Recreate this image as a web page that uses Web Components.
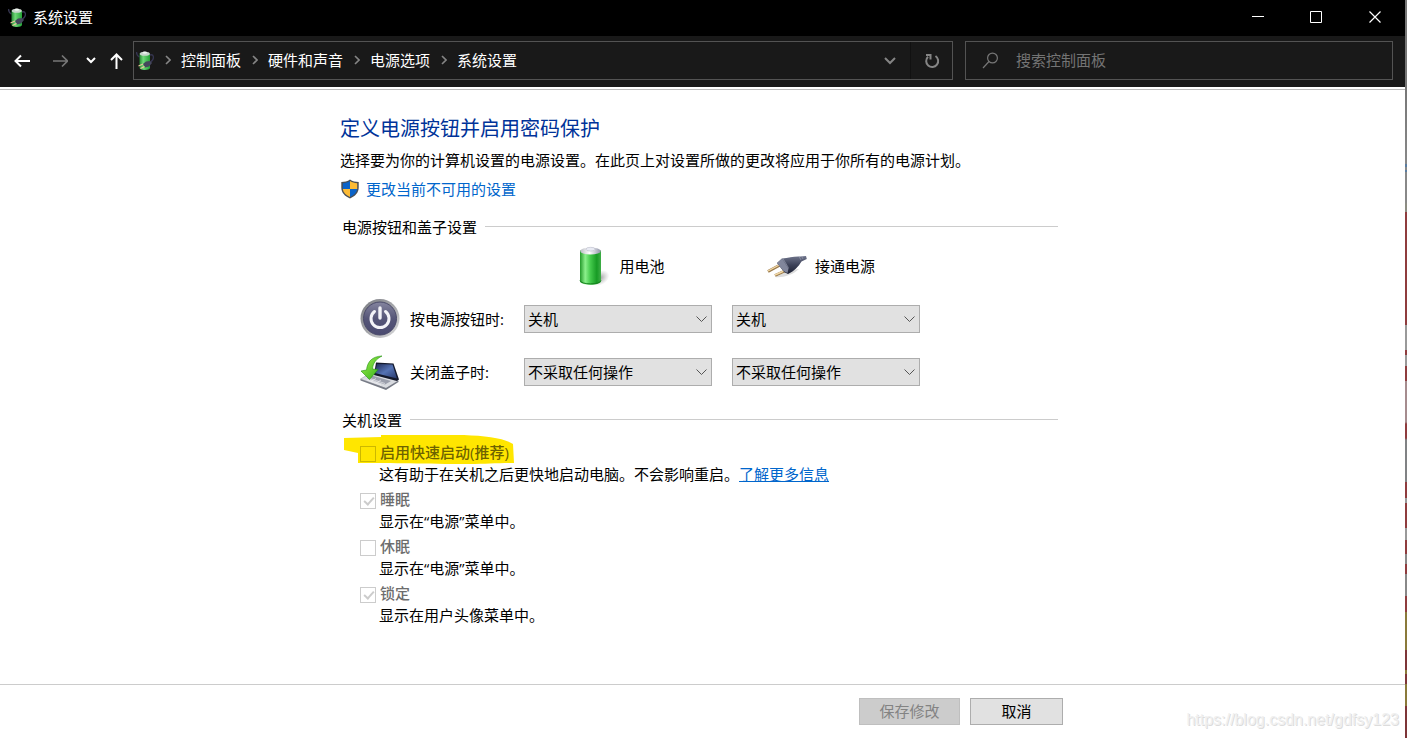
<!DOCTYPE html>
<html lang="zh-CN">
<head>
<meta charset="utf-8">
<title>系统设置</title>
<style>
  body {
    margin: 0;
    background: #fff;
    color: #000;
    font: 15px/20px "Open Sans", "Noto Sans CJK SC", sans-serif;
  }
</style>
</head>
<body>
<settings-window></settings-window>

<template id="window-template">
  <style>
    :host { display: flex; min-height: 100vh; position: relative; }
    .window { flex: 1; min-width: 0; display: flex; flex-direction: column; }
    .desktop {
      width: 2px;
      background: linear-gradient(#777 0 87px, #888 164px, #5a7ca0 164px 167px, #888 167px 170px, #5a7ca0 170px 172px, #888 172px 203px,
        #8c8c82 203px 212px, #8f3c3e 212px 325px, #999 325px 350px, #8f3c3e 350px 355px, #999 355px 366px, #8f3c3e 366px 381px,
        #a58c8e 381px 422px, #8f3c3e 424px 438px, #808284 440px 482px, #8f3c3e 482px 498px, #999 498px 503px, #8f3c3e 503px 528px,
        #999 528px 540px, #8f3c3e 540px 554px, #888 554px 564px, #8f3c3e 564px 574px, #888 574px 596px, #8f3c3e 596px 612px,
        #8a7a3a 612px 650px, #7d3538 650px 670px, #8a7a3a 670px 674px, #7d3538 674px 684px, #8a7a3a 684px 706px, #7d3538 706px);
    }
    main { flex: 1; padding: 26px 0 0; }
    .page { max-width: 725px; margin: 0 auto; }
    h1 { margin: 0; font-size: 20px; line-height: 28px; font-weight: 400; color: #003399; }
    p { margin: 7px 0 0; }
    .admin { display: flex; align-items: center; gap: 7px; margin: 9px 0 18px 1px; }
    .admin a { color: #0066cc; text-decoration: none; }
    .rows { display: grid; row-gap: 13px; padding: 9px 0 0 20px; }
    .sources { display: grid; grid-template-columns: 164px 188px 188px; column-gap: 0; }
    .sources div { display: flex; align-items: center; justify-content: center; gap: 8px; grid-column: 2; }
    .sources div + div { grid-column: 3; margin-left: 20px; margin-right: -10px; }
    .sources svg { flex: none; }
    .shutdown { display: block; margin-top: 18px; }
    .options { display: grid; row-gap: 3px; padding: 11px 0 0 20px; }
    footer { border-top: 1px solid #ccc; margin-top: 40px; }
    .actions { display: flex; justify-content: flex-end; gap: 10px; padding: 13px 2px; box-sizing: border-box; }
    .actions button { font: inherit; line-height: 25px; height: 27px; padding: 0; width: 93px; border: 1px solid #adadad; background: #e1e1e1; color: #000; }
    .actions button:disabled { width: 101px; border-color: #bfbfbf; background: #ccc; color: #838383; }
    .watermark { position: absolute; right: 8px; bottom: 8px; color: #f0f0f0; text-shadow: 1px 1px #dcdcdc; font: 16px/20px "Liberation Sans", sans-serif; }
  </style>
  <div class="window">
    <title-bar>系统设置</title-bar>
    <nav-bar></nav-bar>
    <main>
      <div class="page">
        <h1>定义电源按钮并启用密码保护</h1>
        <p>选择要为你的计算机设置的电源设置。在此页上对设置所做的更改将应用于你所有的电源计划。</p>
        <div class="admin">
          <svg width="18" height="20" viewBox="0 0 18 20">
            <path d="M9 .5C6.500 2.300 3.500 3 .3 3v5.500c0 5.200 3.500 8.800 8.700 11 5.200-2.200 8.700-5.800 8.700-11V3C14.500 3 11.500 2.300 9 .5Z" fill="#4a4f55"/>
            <path d="M9 2C6.800 3.400 4.500 4.100 1.800 4.300V10H9Z" fill="#0b63c8"/>
            <path d="M9 2c2.200 1.400 4.500 2.100 7.200 2.300V10H9Z" fill="#fdbb35"/>
            <path d="M1.800 10H9v8C5 16.200 2.200 13.600 1.800 10Z" fill="#fdbb35"/>
            <path d="M16.200 10H9v8c4-1.800 6.800-4.400 7.200-8Z" fill="#0b63c8"/>
          </svg>
          <a href="#">更改当前不可用的设置</a>
        </div>

        <group-heading>电源按钮和盖子设置</group-heading>
        <div class="rows">
          <div class="sources">
            <div>
              <svg width="40" height="40" viewBox="0 0 40 40">
                <defs>
                  <linearGradient id="cell"><stop offset="0" stop-color="#249a2b"/><stop offset=".25" stop-color="#8cf08c"/><stop offset=".5" stop-color="#43c94b"/><stop offset=".8" stop-color="#179b25"/><stop offset="1" stop-color="#3fae47"/></linearGradient>
                  <linearGradient id="cap"><stop offset="0" stop-color="#b9bcc4"/><stop offset=".45" stop-color="#fff"/><stop offset="1" stop-color="#8f93a8"/></linearGradient>
                  <radialGradient id="shade"><stop offset="0" stop-color="#777" stop-opacity=".7"/><stop offset="1" stop-color="#999" stop-opacity="0"/></radialGradient>
                </defs>
                <ellipse cx="29" cy="32" rx="10" ry="7" transform="rotate(-30 29 32)" fill="url(#shade)"/>
                <path d="M9 4.500V35c0 5 21 5 21 0V4.500Z" fill="url(#cell)"/>
                <path d="M9 34.500c1 4.500 20 4.500 21 0" fill="none" stroke="#17811f"/>
                <ellipse cx="19.500" cy="5" rx="10.300" ry="3.600" fill="url(#cap)"/>
                <ellipse cx="19.500" cy="3.200" rx="4.500" ry="1.900" fill="#e9ebf4" stroke="#aeb1bf" stroke-width=".5"/>
              </svg>
              <span>用电池</span>
            </div>
            <div>
              <svg width="40" height="40" viewBox="0 0 40 40">
                <defs><linearGradient id="plug" x2="0" y2="1"><stop offset="0" stop-color="#6f758c"/><stop offset=".5" stop-color="#3d4258"/><stop offset="1" stop-color="#1c2032"/></linearGradient></defs>
                <path d="M8 31c7 1 18-2 24-8l-8 1Z" fill="#ddd"/>
                <path d="M1 25.500 13 19" stroke="#9a7a4b" stroke-width="3"/>
                <path d="m1 25 12-6.500" stroke="#f2d8a5" stroke-width="1.400"/>
                <path d="m8 29.500 12-5.500" stroke="#9a7a4b" stroke-width="3"/>
                <path d="m8 29 12-5.500" stroke="#f2d8a5" stroke-width="1.400"/>
                <path d="m10 17 5-4.500c7-.5 12-2.500 18-2l6-.5.800 3-5.300 2.500c-3 5-7 9.500-13.500 12.500l-4-2Z" fill="url(#plug)"/>
                <path d="m10 17 5-4.500 6.500 10-1 4.500-4-2Z" fill="#81869b"/>
                <path d="m16 12.800 5.500 9M32 10.500l2 3.500M34.500 10l1.500 3" stroke="#a0a5b7" stroke-width=".6"/>
              </svg>
              <span>接通电源</span>
            </div>
          </div>
          <power-row label="按电源按钮时:" value="关机">
            <svg width="40" height="40" viewBox="0 0 40 40">
              <defs>
                <linearGradient id="ring" x2="1" y2="1"><stop offset="0" stop-color="#77797f"/><stop offset=".5" stop-color="#a4a5a9"/><stop offset="1" stop-color="#dedee0"/></linearGradient>
                <linearGradient id="disc" x2="0" y2="1"><stop offset="0" stop-color="#85859f"/><stop offset=".5" stop-color="#565678"/><stop offset="1" stop-color="#4a4a70"/></linearGradient>
              </defs>
              <circle cx="20" cy="19.500" r="19.500" fill="url(#ring)"/>
              <circle cx="20" cy="19.500" r="16.500" fill="url(#disc)" stroke="#4a4a69"/>
              <path d="M14.500 12.500a9 9 0 1 0 11 0" fill="none" stroke="#f4f4f8" stroke-width="3" stroke-linecap="round"/>
              <path d="M20 9V19" stroke="#f4f4f8" stroke-width="3.400" stroke-linecap="round"/>
            </svg>
          </power-row>
          <power-row label="关闭盖子时:" value="不采取任何操作">
            <svg width="40" height="40" viewBox="0 0 40 40">
              <defs>
                <linearGradient id="lid" x2="1" y2="1"><stop offset="0" stop-color="#1f2b56"/><stop offset=".5" stop-color="#5573b4"/><stop offset="1" stop-color="#26376b"/></linearGradient>
                <linearGradient id="arrow" x2="1" y2="1"><stop offset="0" stop-color="#a2f04f"/><stop offset="1" stop-color="#2fae18"/></linearGradient>
              </defs>
              <path d="M.5 27 11 21l27 8-12 7.500Z" fill="#d9dbe0" stroke="#9a9da6" stroke-width=".6"/>
              <path d="m.5 27 25.500 9V38L.5 28.500ZM26 36l12.500-7.500V30L26 38Z" fill="#777b86"/>
              <path d="m7 26 5-2.500 19 5.500-6 3.500Z" fill="#9b9fac"/>
              <path d="M7 28 21 33M10 26.500 25 31.500M11 29.500l5-3M16 31l5-3" stroke="#f4f4f6" stroke-width=".6"/>
              <path d="m16 10.500 17.500 1L39 27.500l-2 1.500-23-6Z" fill="#14192b"/>
              <path d="m17 12 15.500.5 4.500 14L15 21Z" fill="url(#lid)"/>
              <path d="M22 4C12 4.500 7.500 9.500 6.500 18L1 19l8.500 8.500L18 17.500l-5.500-.5c.5-6 3.500-10 9.500-13Z" fill="url(#arrow)" stroke="#23930f" stroke-width=".6"/>
            </svg>
          </power-row>
        </div>

        <group-heading class="shutdown">关机设置</group-heading>
        <div class="options">
          <shutdown-option label="启用快速启动(推荐)" highlighted>这有助于在关机之后更快地启动电脑。不会影响重启。<a href="#" style="color:#0066cc">了解更多信息</a></shutdown-option>
          <shutdown-option label="睡眠" checked>显示在“电源”菜单中。</shutdown-option>
          <shutdown-option label="休眠">显示在“电源”菜单中。</shutdown-option>
          <shutdown-option label="锁定" checked>显示在用户头像菜单中。</shutdown-option>
        </div>
      </div>
    </main>
    <footer>
      <div class="page actions">
        <button type="button" disabled>保存修改</button>
        <button type="button">取消</button>
      </div>
    </footer>
  </div>
  <div class="desktop"></div>
  <span class="watermark">https://blog.csdn.net/gdfsy123</span>
</template>

<template id="battery-template">
  <style>:host { display: block; flex: none; width: 18px; height: 20px; } svg { display: block; }</style>
  <svg width="18" height="20" viewBox="0 0 18 20">
    <defs><linearGradient id="g"><stop offset="0" stop-color="#278a35"/><stop offset=".35" stop-color="#6fd878"/><stop offset="1" stop-color="#23a337"/></linearGradient></defs>
    <path d="M.5 1c0 3 1 4 3 5M14 4c4-1 4 3 2.500 5L14 12" fill="none" stroke="#34344f" stroke-width="1.400"/>
    <path d="M3.500 2.500v14.500c0 2.500 10.500 2.500 10.500 0V2.500Z" fill="url(#g)"/>
    <ellipse cx="8.800" cy="2.800" rx="5" ry="2" fill="#c8d5cc"/>
    <ellipse cx="8.800" cy="1.600" rx="2.300" ry="1.200" fill="#eef3f0"/>
    <path d="m7 13 3-2.500 4-.5 2 2-3 3.500-4 1Z" fill="#45475c"/>
    <path d="m2.500 15 4.500-2M4.500 17.500l4-2" stroke="#e8c79a" stroke-width="1.300"/>
  </svg>
</template>

<template id="title-template">
  <style>
    :host { display: flex; align-items: center; height: 36px; background: #000; color: #fff; padding-left: 8px; }
    .name { flex: 1; margin-left: 7px; padding-bottom: 2px; }
    button { width: 58px; height: 36px; padding: 0 0 2px; border: 0; background: none; color: inherit; display: grid; place-items: center; }
    button:last-child { width: 60px; }
  </style>
  <battery-icon></battery-icon>
  <span class="name"><slot></slot></span>
  <button type="button" aria-label="最小化"><svg width="12" height="12"><path d="M0 5.500h12" stroke="#fff"/></svg></button>
  <button type="button" aria-label="最大化"><svg width="12" height="12"><path d="M.5.5h11v11H.5Z" fill="none" stroke="#fff"/></svg></button>
  <button type="button" aria-label="关闭"><svg width="12" height="12"><path d="m.5.5 11 11m0-11-11 11" stroke="#fff" stroke-width="1.200"/></svg></button>
</template>

<template id="nav-template">
  <style>
    :host { display: block; background: #191919; color: #fff; border-bottom: 2px solid #fff; box-shadow: 0 1px #bbb; }
    .bar { display: grid; grid-template-columns: auto minmax(0, 1fr) minmax(0, 428px); column-gap: 12px; padding: 5px 12px 7px 3px; }
    .moves { display: flex; margin-right: -8px; }
    button { border: 0; background: none; padding: 0; display: grid; place-items: center; height: 37px; }
    .moves button { width: 38px; height: 39px; }
    .moves .recent { width: 24px; }
    .moves .up { width: 26px; }
    .address, .search { box-sizing: border-box; height: 39px; border: 1px solid #535353; display: flex; align-items: center; }
    .address { padding-left: 2px; }
    ol { flex: 1; display: flex; margin: 0; padding: 0 0 2px; list-style: none; white-space: nowrap; }
    li { display: flex; align-items: center; }
    li a { color: inherit; text-decoration: none; }
    .sep { width: 27px; box-sizing: border-box; padding-left: 11px; }
    .drop { width: 40px; }
    .refresh { width: 42px; border-left: 1px solid #111; }
    .search { padding-left: 16px; gap: 17px; }
    .search svg { flex: none; }
    input { flex: 1; min-width: 0; height: 30px; border: 0; padding: 0 0 2px; box-sizing: border-box; background: none; color: #fff; font: inherit; outline: 0; }
    input::placeholder { color: #747474; opacity: 1; }
    svg { fill: none; display: block; }
  </style>
  <div class="bar">
    <div class="moves">
      <button type="button" aria-label="后退"><svg width="16" height="14" stroke="#fff" stroke-width="2"><path d="M16 7H2M7 1.500 1.500 7 7 12.500"/></svg></button>
      <button type="button" aria-label="前进"><svg width="16" height="14" stroke="#777" stroke-width="1.700"><path d="M1 7h14M10 1.500 15.500 7 10 12.500"/></svg></button>
      <button type="button" class="recent" aria-label="最近浏览的位置"><svg width="10" height="7" stroke="#fff" stroke-width="2"><path d="m1 1 4 4 4-4"/></svg></button>
      <button type="button" class="up" aria-label="上移"><svg width="14" height="16" stroke="#fff" stroke-width="2"><path d="M7.500 16V2M2 7l5.500-5.500L13 7"/></svg></button>
    </div>
    <div class="address">
      <battery-icon></battery-icon>
      <ol></ol>
      <button type="button" class="drop" aria-label="以前的位置"><svg width="12" height="8" stroke="#858585" stroke-width="2"><path d="m1 1 5 5 5-5"/></svg></button>
      <button type="button" class="refresh" aria-label="刷新"><svg width="16" height="16" stroke="#858585" stroke-width="2"><path d="M11.500 3a6 6 0 1 1-7.500.7M2 2h4.500v4.500"/></svg></button>
    </div>
    <div class="search">
      <svg width="17" height="17" stroke="#777" stroke-width="1.200"><circle cx="10.500" cy="6" r="4.900"/><path d="M7 9.500 1 16"/></svg>
      <input type="search" placeholder="搜索控制面板" aria-label="搜索控制面板">
    </div>
  </div>
</template>

<template id="group-template">
  <style>
    :host { display: block; }
    h2 { display: flex; align-items: center; gap: 8px; margin: 0 7px 0 2px; font: inherit; }
    h2::after { content: ""; flex: 1; height: 1px; margin-bottom: 2px; background: #ccc; }
  </style>
  <h2><slot></slot></h2>
</template>

<template id="row-template">
  <style>
    :host { display: grid; grid-template-columns: 40px 104px 188px 188px; align-items: center; min-height: 40px; }
    :host { column-gap: 10px; }
    .field { position: relative; display: block; }
    .field + .field { margin-left: 10px; margin-right: -10px; }
    select { appearance: none; display: block; width: 100%; height: 28px; box-sizing: border-box; border: 1px solid #adadad; border-radius: 0; background: #e1e1e1; padding: 0 24px 0 3px; font: inherit; color: #000; }
    .field svg { position: absolute; right: 5px; top: 11px; pointer-events: none; }
  </style>
  <slot></slot>
  <label for="battery"></label>
  <span class="field"><select id="battery"></select><svg width="11" height="7"><path d="m.5.500 5 5 5-5" fill="none" stroke="#555"/></svg></span>
  <span class="field"><select id="mains"></select><svg width="11" height="7"><path d="m.5.500 5 5 5-5" fill="none" stroke="#555"/></svg></span>
</template>

<template id="option-template">
  <style>
    :host { display: block; position: relative; isolation: isolate; }
    .head { display: flex; align-items: center; gap: 4px; line-height: 22px; color: #6d6d6d; }
    label { font-weight: 500; }
    input { appearance: none; margin: 3px 0 0; width: 16px; height: 16px; border: 1px solid #ccc; box-sizing: border-box; position: relative; }
    input:checked::after { content: ""; position: absolute; left: 5px; top: 1px; width: 4px; height: 8px; border: solid #ccc; border-width: 0 2px 2px 0; transform: rotate(42deg); }
    .note { line-height: 22px; padding-left: 19px; }
    .marker { display: none; position: absolute; left: -16px; top: -6px; z-index: -1; }
    :host([highlighted]) .marker { display: block; }
    :host([highlighted]) .head { color: #6d6200; }
    :host([highlighted]) input { border-color: #ccb800; }
  </style>
  <svg class="marker" width="170" height="30"><path d="M0 3 37 2V0h83c22 1 40 3 49 9l1 19c-16 0-28 1-45 1-45 0-75-1-111-1V18L0 15Z" fill="#ffe600"/></svg>
  <div class="head"><input type="checkbox" id="box" disabled><label for="box"></label></div>
  <div class="note"><slot></slot></div>
</template>

<script>
  class TemplateElement extends HTMLElement {
    constructor() {
      super();
      const template = document.getElementById(this.constructor.template);
      this.attachShadow({ mode: "open" }).append(template.content.cloneNode(true));
    }
    find(selector) { return this.shadowRoot.querySelector(selector); }
  }

  class BatteryIcon extends TemplateElement { static template = "battery-template"; }
  class TitleBar extends TemplateElement { static template = "title-template"; }
  class GroupHeading extends TemplateElement { static template = "group-template"; }
  class SettingsWindow extends TemplateElement { static template = "window-template"; }

  class NavBar extends TemplateElement {
    static template = "nav-template";
    connectedCallback() {
      const chevron = '<svg width="6" height="10" stroke="#858585" stroke-width="1.600"><path d="m1 1 4 4-4 4"/></svg>';
      this.find("ol").innerHTML = ["控制面板", "硬件和声音", "电源选项", "系统设置"]
        .map(name => `<li><span class="sep">${chevron}</span><a href="#">${name}</a></li>`).join("");
    }
  }

  class PowerRow extends TemplateElement {
    static template = "row-template";
    connectedCallback() {
      const label = this.getAttribute("label");
      this.find("label").textContent = label;
      this.find("#mains").setAttribute("aria-label", label);
      for (const select of this.shadowRoot.querySelectorAll("select")) {
        select.add(new Option(this.getAttribute("value")));
      }
    }
  }

  class ShutdownOption extends TemplateElement {
    static template = "option-template";
    connectedCallback() {
      this.find("label").textContent = this.getAttribute("label");
      this.find("input").checked = this.hasAttribute("checked");
    }
  }

  customElements.define("battery-icon", BatteryIcon);
  customElements.define("title-bar", TitleBar);
  customElements.define("nav-bar", NavBar);
  customElements.define("group-heading", GroupHeading);
  customElements.define("power-row", PowerRow);
  customElements.define("shutdown-option", ShutdownOption);
  customElements.define("settings-window", SettingsWindow);
</script>
</body>
</html>
